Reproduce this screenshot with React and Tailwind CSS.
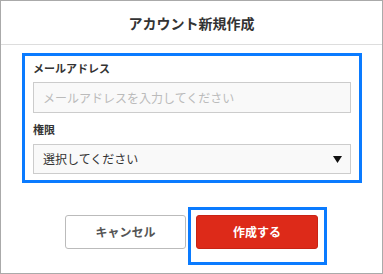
import React from 'react';

const font = { fontFamily: '"Noto Sans CJK JP", "Noto Sans", sans-serif' };

const App = () => {
  return (
    <div style={font} className="w-[383px] h-[274px] bg-white border border-[#aaa] flex flex-col">
      {/* Header */}
      <div className="h-[44px] shrink-0 border-b border-[#ddd] flex items-center justify-center">
        <h1 className="text-[14px] font-bold text-[#333] leading-none">アカウント新規作成</h1>
      </div>

      {/* Form */}
      <div className="pt-[8px] pl-[21px]">
        <div className="w-[340px] border-[3px] border-[#0a7bff] px-[8px] pt-[4px] pb-[6px]">
          <label className="block text-[11px] font-bold text-[#333] leading-[16px]">メールアドレス</label>
          <input
            type="text"
            placeholder="メールアドレスを入力してください"
            className="mt-[6px] w-full h-[31px] px-[9px] bg-[#f9f9f9] border border-[#ccc] text-[12px] text-[#333] placeholder:text-[#bbb] outline-none"
          />
          <label className="block mt-[8px] text-[11px] font-bold text-[#333] leading-[16px]">権限</label>
          <div className="mt-[7px] w-full h-[30px] pl-[9px] pr-[8px] bg-[#f9f9f9] border border-[#ccc] flex items-center justify-between">
            <span className="text-[12px] text-[#333]">選択してください</span>
            <svg width="9" height="7" viewBox="0 0 9 7">
              <polygon points="0,0 9,0 4.5,7" fill="#111" />
            </svg>
          </div>
        </div>
      </div>

      {/* Buttons */}
      <div className="mt-[24px] pl-[64px] flex items-start gap-[2px]">
        <button className="mt-[8px] w-[121px] h-[34px] bg-white border border-[#bbb] rounded-[3px] text-[12px] font-bold text-[#555]">
          キャンセル
        </button>
        <div className="border-[3px] border-[#0a7bff] pt-[5px] pb-[13px] pl-[5px] pr-[6px]">
          <button className="w-[122px] h-[34px] bg-[#dd2a19] border border-[#c92314] rounded-[3px] text-[12px] font-bold text-white">
            作成する
          </button>
        </div>
      </div>
    </div>
  );
};

export default App;
